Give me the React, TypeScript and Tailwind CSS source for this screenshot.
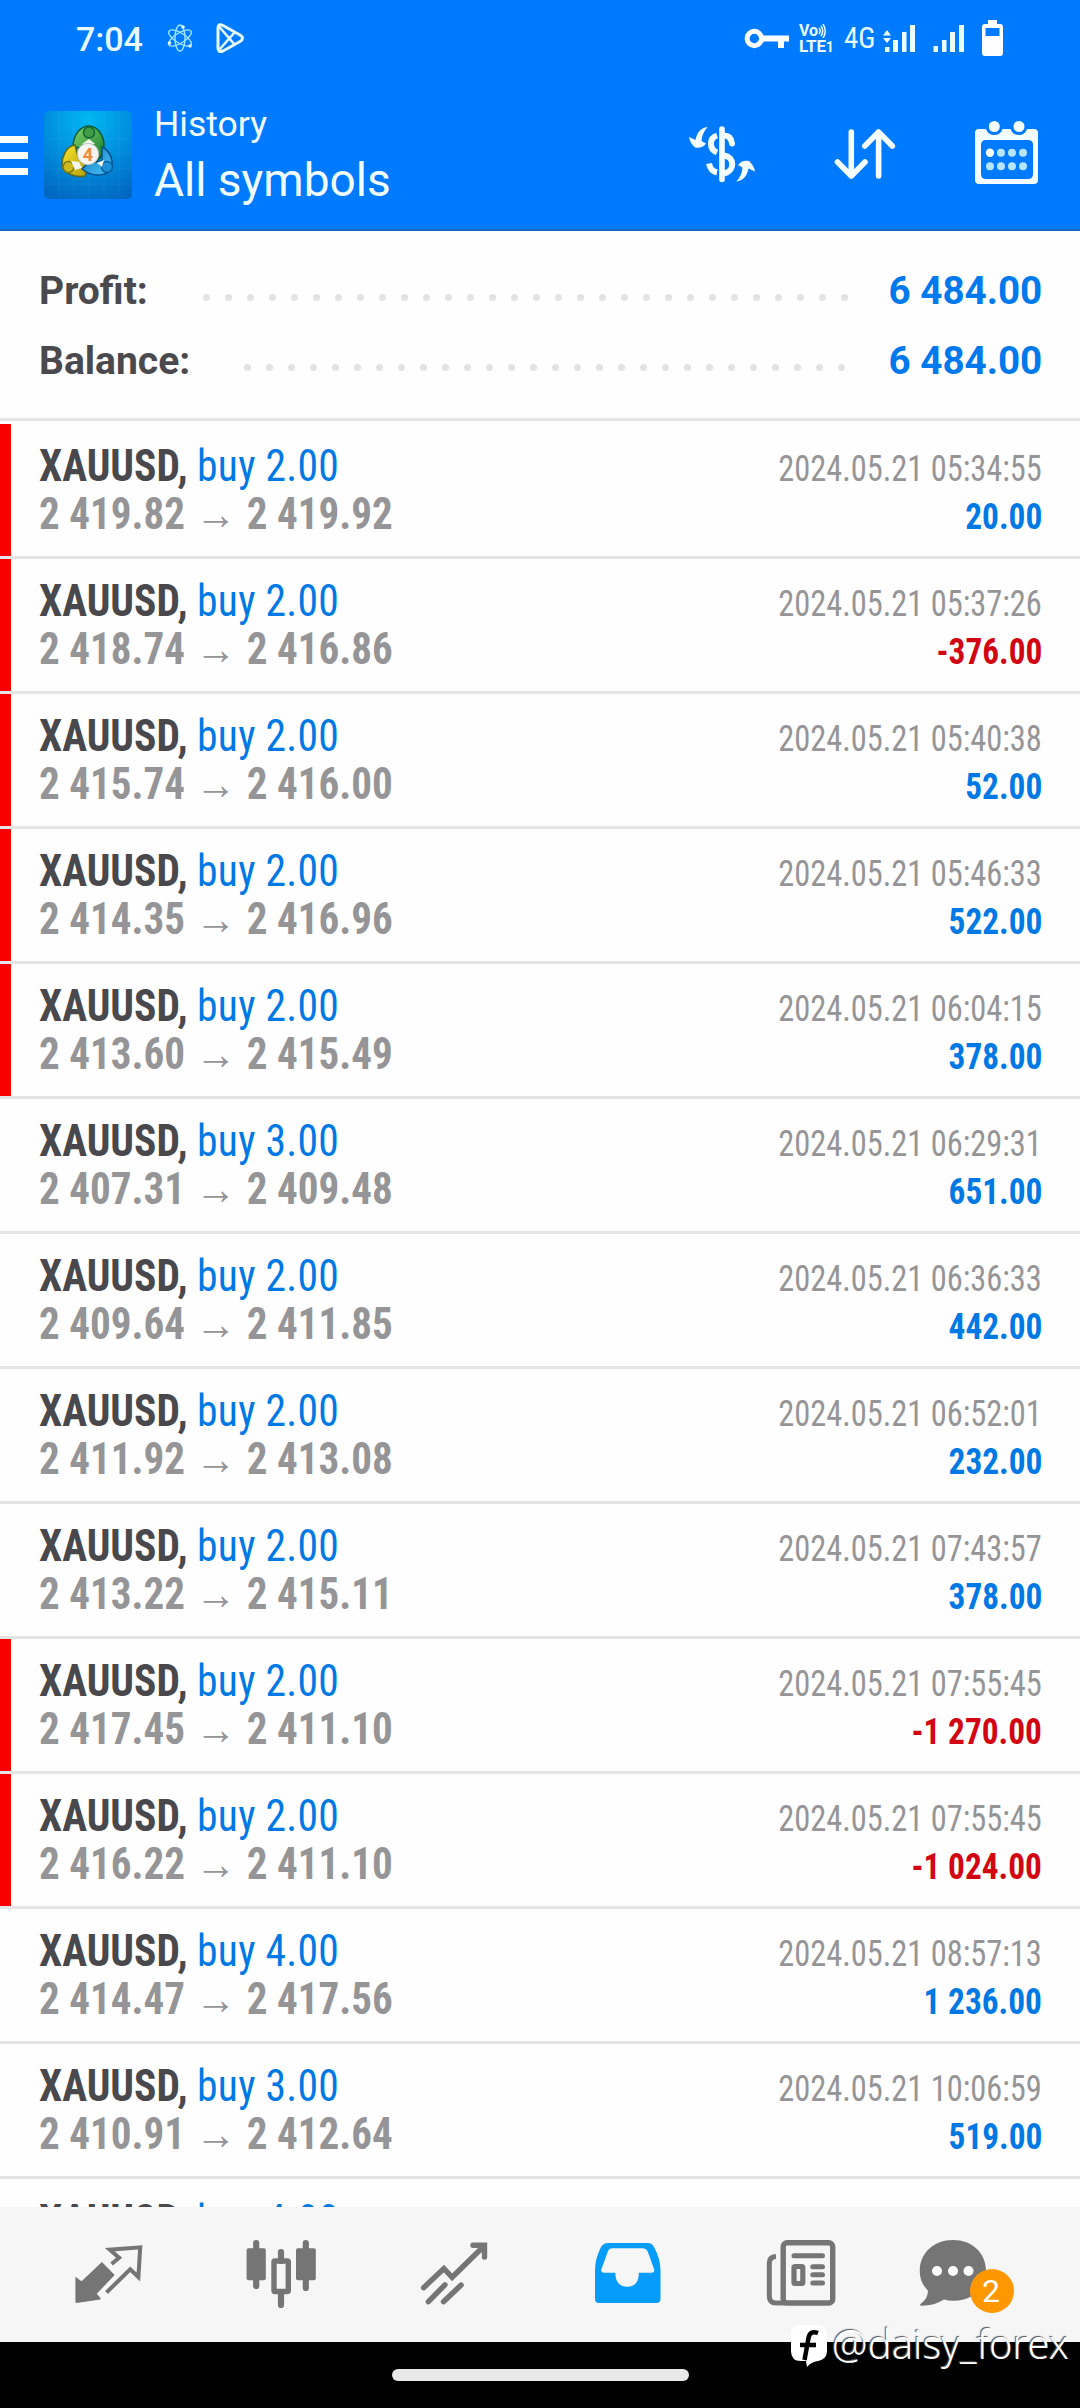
import type { ReactNode } from "react";

type Deal = {
  volume: string;
  open: string;
  close: string;
  time: string;
  profit: string;
  marked?: boolean;
};

const deals: Deal[] = [
  { volume: "2.00", open: "2 419.82", close: "2 419.92", time: "2024.05.21 05:34:55", profit: "20.00", marked: true },
  { volume: "2.00", open: "2 418.74", close: "2 416.86", time: "2024.05.21 05:37:26", profit: "-376.00", marked: true },
  { volume: "2.00", open: "2 415.74", close: "2 416.00", time: "2024.05.21 05:40:38", profit: "52.00", marked: true },
  { volume: "2.00", open: "2 414.35", close: "2 416.96", time: "2024.05.21 05:46:33", profit: "522.00", marked: true },
  { volume: "2.00", open: "2 413.60", close: "2 415.49", time: "2024.05.21 06:04:15", profit: "378.00", marked: true },
  { volume: "3.00", open: "2 407.31", close: "2 409.48", time: "2024.05.21 06:29:31", profit: "651.00" },
  { volume: "2.00", open: "2 409.64", close: "2 411.85", time: "2024.05.21 06:36:33", profit: "442.00" },
  { volume: "2.00", open: "2 411.92", close: "2 413.08", time: "2024.05.21 06:52:01", profit: "232.00" },
  { volume: "2.00", open: "2 413.22", close: "2 415.11", time: "2024.05.21 07:43:57", profit: "378.00" },
  { volume: "2.00", open: "2 417.45", close: "2 411.10", time: "2024.05.21 07:55:45", profit: "-1 270.00", marked: true },
  { volume: "2.00", open: "2 416.22", close: "2 411.10", time: "2024.05.21 07:55:45", profit: "-1 024.00", marked: true },
  { volume: "4.00", open: "2 414.47", close: "2 417.56", time: "2024.05.21 08:57:13", profit: "1 236.00" },
  { volume: "3.00", open: "2 410.91", close: "2 412.64", time: "2024.05.21 10:06:59", profit: "519.00" },
];

function StatusBar() {
  return (
    <div className="flex h-[76px] items-start pt-[18px] text-[#e8fcff]">
      <span className="ml-[76px] w-[90px] text-[34px] leading-[43px] font-medium">7:04</span>
      <svg className="h-10 w-7" viewBox="166 18 28 40" fill="none" stroke="#9fe6ff" strokeWidth="1.4">
        <ellipse cx="180" cy="38" rx="5" ry="13" />
        <ellipse cx="180" cy="38" rx="5" ry="13" transform="rotate(58 180 38)" />
        <ellipse cx="180" cy="38" rx="5" ry="13" transform="rotate(-58 180 38)" />
        <g fill="#dffaff" stroke="none">
          <circle cx="183" cy="27" r="1.8" />
          <circle cx="169.500" cy="43" r="1.8" />
          <circle cx="190" cy="46" r="1.8" />
        </g>
      </svg>
      <svg className="ml-5 h-10 w-8" viewBox="214 18 32 40" fill="none" stroke="#e4fbff" strokeWidth="3" strokeLinejoin="round">
        <path d="M218 28Q218 23 223 25.500L240 35Q245 38 240 41.500L223 51Q218 53 218 48Z" />
        <path d="M219 26.500L235 45M219 50L235 32" strokeWidth="2.600" />
      </svg>

      <svg className="ml-auto h-10 w-[46px]" viewBox="742 18 46 40">
        <circle cx="752.300" cy="38.500" r="7.200" fill="none" stroke="#fff" strokeWidth="5" />
        <path d="M760 35.500H787V41.500H782V48H776V41.500H760Z" fill="#fff" />
      </svg>
      <div className="ml-[9px] flex h-[38px] w-[36px] flex-col pt-[6px] font-bold">
        <div className="flex h-[14px] items-center">
          <span className="text-[16px] leading-[14px]">Vo</span>
          <svg className="h-[14px] w-[9px]" viewBox="0 0 8 14" fill="none" stroke="#e8fcff" strokeWidth="1.5">
            <path d="M.5 4Q3 7 .5 10M2.500 2Q6 7 2.500 12M4.500 0Q9 7 4.500 14" />
          </svg>
        </div>
        <div className="flex h-[16px] items-end">
          <span className="text-[17px] leading-[15px] tracking-[-0.2px]">LTE</span>
          <span className="text-[14px] leading-[13px]">1</span>
        </div>
      </div>
      <span className="ml-[9px] w-[39px] pt-[3px] text-[29px] leading-[35px] [font-stretch:75%]">4G</span>
      <svg className="h-10 w-8" viewBox="883 18 32 40" fill="#eafdff">
        <path d="M887 30L891 35.500H883ZM887 43L891 38H883ZM885 47H889.500V52H885ZM893 40H898V52H893ZM902 32H906.500V52H902ZM910 25H915V52H910Z" />
      </svg>
      <svg className="ml-[18px] h-10 w-8" viewBox="933 18 32 40" fill="#eafdff">
        <path d="M933.500 46H938V52H933.500ZM942 40H946.500V52H942ZM950 32H955V52H950ZM959 25H964V52H959Z" />
      </svg>
      <svg className="mr-[77px] ml-[17px] h-10 w-[21px]" viewBox="982 18 21 40">
        <path fill="#fff" fillRule="evenodd" d="M988 20H997V24H1000Q1003 24 1003 27V53Q1003 56 1000 56H985Q982 56 982 53V27Q982 24 985 24H988ZM985.500 28V36H999.500V28Z" />
      </svg>
    </div>
  );
}

function AppLogo() {
  return (
    <svg className="h-[88px] w-[88px]" viewBox="0 0 88 88">
      <defs>
        <radialGradient id="tile" cx="0.5" cy="0.1" r="1">
          <stop offset="0" stopColor="#00b8f2" />
          <stop offset="0.55" stopColor="#0089dc" />
          <stop offset="1" stopColor="#0064bd" />
        </radialGradient>
        <linearGradient id="green" x1="0" x2="1" y1="0" y2="1">
          <stop offset="0" stopColor="#86d36c" />
          <stop offset="1" stopColor="#117a2a" />
        </linearGradient>
        <linearGradient id="yellow" x1="0" x2="1" y1="0" y2="1">
          <stop offset="0" stopColor="#f6e52a" />
          <stop offset="1" stopColor="#b59b0a" />
        </linearGradient>
        <linearGradient id="blue" x1="0" x2="1" y1="0" y2="1">
          <stop offset="0" stopColor="#0d78c2" />
          <stop offset="1" stopColor="#4cc4f5" />
        </linearGradient>
      </defs>
      <rect width="88" height="88" rx="5" fill="url(#tile)" />
      <path d="M15 1V87M30 1V87M45 1V87M60 1V87M75 1V87M1 28H87M1 43H87M1 58H87M1 73H87" stroke="#fff" strokeOpacity="0.05" />
      <g strokeWidth="1.500">
        <path d="M29 36C29 22 38 15 45 15C53 15 60 24 60 34C60 41 57 47 52 50L46 38Z" fill="url(#green)" stroke="#0b5a3a" />
        <path d="M31 34C22 35 18 46 18 54C18 62 32 67 41 65L46 52L34 46Z" fill="url(#yellow)" stroke="#5c6a20" />
        <path d="M58 36C67 40 69 50 68 57C65 65 48 67 38 58L44 52L58 50Z" fill="url(#blue)" stroke="#0a4f8c" />
        <circle cx="45" cy="21.500" r="5.500" fill="#3f9d43" stroke="#136a35" />
        <circle cx="24.500" cy="56" r="5.500" fill="#cdbb1c" stroke="#7b7a17" />
        <circle cx="63" cy="56" r="5.500" fill="#1c8fd6" stroke="#0b5fa0" />
      </g>
      <path d="M38 33L45 28L51 33ZM27 50L35 51L38 57L31 59ZM53 52L60 49L58 56Z" fill="#f2f8ee" />
      <circle cx="44" cy="43" r="10.700" fill="#f6f4f1" stroke="#b9c2c0" />
      <text x="44" y="49.500" textAnchor="middle" fontSize="18" fontWeight="700" fill="#f08a3c" fontFamily="Roboto, sans-serif">4</text>
    </svg>
  );
}

function Header() {
  return (
    <header className="h-[231px] shrink-0 border-b-2 border-[#1268bd] bg-[#007aff]">
      <StatusBar />
      <div className="flex h-[152px] items-start text-[#f0fdff]">
        <div className="mt-[60px] flex w-7 flex-col gap-[9px]">
          <div className="h-[7px] bg-white" />
          <div className="h-[7px] bg-white" />
          <div className="h-[7px] bg-white" />
        </div>
        <div className="mt-[35px] ml-4">
          <AppLogo />
        </div>
        <div className="mt-[25px] ml-[22px] flex flex-col">
          <span className="text-[35.500px] leading-[46px]">History</span>
          <span className="mt-[3px] text-[46px] leading-[60px]">All symbols</span>
        </div>
        <svg className="mt-[45px] ml-auto h-[66px] w-[68px]" viewBox="688 121 68 66">
          <g fill="#f4feff">
            <path d="M707.700 127C700 128 697 133 695.500 140L689 137Q690 143 695 147.500Q702 149 706 143.500L701.500 141C702 135 704 131 707.700 127Z" />
            <path d="M707.700 127C700 128 697 133 695.500 140L689 137Q690 143 695 147.500Q702 149 706 143.500L701.500 141C702 135 704 131 707.700 127Z" transform="rotate(180 722 154.300)" />
          </g>
          <g fill="none" stroke="#f4feff">
            <path d="M722 129V179.500" strokeWidth="5.600" strokeLinecap="round" />
            <path d="M717 135.500C709 138 709 149 717 152.500M717 172.500Q710.500 171 709 163.500" strokeWidth="6" />
            <path d="M724 135.500Q731 135.500 732 143.500" strokeWidth="6" strokeLinecap="round" />
            <path d="M724 155.500C735 157 735 171 724 173.500" strokeWidth="6" />
          </g>
        </svg>
        <svg className="mt-[45px] ml-[76px] h-[66px] w-16" viewBox="832 121 64 66" fill="none" stroke="#f4feff" strokeWidth="5.600" strokeLinecap="round" strokeLinejoin="round">
          <path d="M851.300 132V176M837.500 162L851.300 176L865 162M878.600 176V132M864.800 146L878.600 132L892.300 146" />
        </svg>
        <svg className="mt-[43px] mr-[41px] ml-[78px] h-[68px] w-[65px]" viewBox="974 119 65 68">
          <path fill="#f4feff" fillRule="evenodd" d="M979 129H986Q988 135 994.300 135Q1000.500 135 1002.500 129H1010.500Q1012.500 135 1019 135Q1025 135 1027 129H1034Q1038 129 1038 133V180Q1038 184 1034 184H979Q975 184 975 180V133Q975 129 979 129ZM986 140Q981 140 981 145V174Q981 179 986 179H1028Q1033 179 1033 174V145Q1033 140 1028 140Z" />
          <g fill="#f4feff">
            <circle cx="994.300" cy="126.500" r="5.500" />
            <circle cx="1019" cy="126.500" r="5.500" />
            <circle cx="990" cy="152.700" r="4.200" />
          </g>
          <g fill="#b5e5ff">
            <circle cx="1001" cy="152.700" r="4" />
            <circle cx="1012" cy="152.700" r="4" />
            <circle cx="1023" cy="152.700" r="4" />
            <circle cx="990" cy="166.300" r="4" />
            <circle cx="1001" cy="166.300" r="4" />
            <circle cx="1012" cy="166.300" r="4" />
            <circle cx="1023" cy="166.300" r="4" />
          </g>
        </svg>
      </div>
    </header>
  );
}

function SummaryRow({ label, value, dots, trailing }: { label: string; value: string; dots: number; trailing: string }) {
  return (
    <div className="flex h-[70px] items-center pr-10 pl-[39px] text-[39px] leading-[70px] font-bold">
      <span className="text-[#4a494d]">{label}</span>
      <div className={`mt-[13px] ml-auto flex gap-[15px] ${trailing}`}>
        {Array.from({ length: dots }, (_, i) => (
          <span key={i} className="size-[7px] rounded-full bg-[#e3e3e5]" />
        ))}
      </div>
      <span className="w-[153px] origin-right scale-x-[0.99] text-right whitespace-nowrap text-[#0079ec]">{value}</span>
    </div>
  );
}

function DealRow({ deal }: { deal: Deal }) {
  const negative = deal.profit.startsWith("-");
  return (
    <div className="flex h-[135px] border-b-[3px] border-[#e4e4e4]">
      <div className={deal.marked ? "w-[11px] bg-[#f80000]" : "w-[11px]"} />
      <div className="flex flex-1 flex-col pt-[18px] pr-[38px] pl-7 [font-stretch:75%]">
        <div className="flex h-12 items-baseline justify-between leading-[48px]">
          <div className="origin-left scale-x-[0.943] text-[44px] whitespace-pre">
            <span className="font-bold text-[#49484c]">XAUUSD, </span>
            <span className="tracking-[0.3px] text-[#0079e4]">buy {deal.volume}</span>
          </div>
          <div className="origin-right scale-x-[0.9] text-[36px] text-[#959597]">{deal.time}</div>
        </div>
        <div className="flex h-12 items-baseline justify-between leading-[48px] font-bold">
          <div className="flex origin-left scale-x-[0.934] text-[44px] text-[#959597]">
            <span>{deal.open}</span>
            <span className="mr-[11px] ml-[11px] w-[44px] font-['Roboto','Liberation_Serif',serif]">{deal.open && "→"}</span>
            <span>{deal.close}</span>
          </div>
          <div className={negative ? "origin-right scale-x-[0.925] text-[36px] text-[#d20512]" : "origin-right scale-x-[0.925] text-[36px] text-[#0079e4]"}>
            {deal.profit}
          </div>
        </div>
      </div>
    </div>
  );
}

function NavIcon({ children }: { children: ReactNode }) {
  return (
    <svg className="h-[135px] w-[173px]" viewBox="0 0 173 135" fill="none">
      {children}
    </svg>
  );
}

function BottomNav() {
  return (
    <nav className="flex h-[135px] shrink-0 bg-[#f6f6f6] pl-[22px]">
      <NavIcon>
        <path d="M53.400 69.700L59.600 74.300L79.900 55L92.700 68L74.800 86.700L78.500 91V92.500L54.400 96L53.400 95Z" fill="#757575" />
        <path d="M89.600 57L97.100 50.700L87.800 42.700L118.200 40.300L116.400 70L108.200 62.300L84.500 85.500" stroke="#757575" strokeWidth="4" />
      </NavIcon>
      <NavIcon>
        <path d="M61.200 36V79M110.800 36V81M86 45V54M86 86V98" stroke="#757575" strokeWidth="6.200" strokeLinecap="round" />
        <rect x="51.600" y="41.300" width="19.200" height="32" rx="2" fill="#757575" />
        <rect x="101" y="41.300" width="19.800" height="32" rx="2" fill="#757575" />
        <rect x="79" y="54" width="14.300" height="30.500" rx="1" stroke="#757575" strokeWidth="5.400" />
      </NavIcon>
      <NavIcon>
        <path d="M55.600 80.700L75.900 61.500L84.100 70.300L115 40M105 38.300H116.500V50M60.400 94.700L76.900 77.800M75.500 94.700L93.100 78" stroke="#757575" strokeWidth="5.400" strokeLinecap="round" />
      </NavIcon>
      <NavIcon>
        <path
          d="M67 36H107Q111 36 113 40Q119.500 52 119.500 63V92Q119.500 96 115.500 96H58Q54 96 54 92V63Q54 52 60 40Q62.500 36 67 36ZM71 41.300Q68 41.300 67 44L60.500 62Q59.500 65.700 62.500 65.700H74.400V68Q75.500 79.700 86.200 79.700Q96.700 79.700 97.800 68V65.700H111Q114 65.700 113 62L106.500 44Q105 41.300 102 41.300Z"
          fill="#069cfc"
          fillRule="evenodd"
        />
      </NavIcon>
      <NavIcon>
        <rect x="69.200" y="35.700" width="49.500" height="60.300" rx="4" stroke="#757575" strokeWidth="5.400" />
        <path d="M62 49.500Q55.300 50 55.300 56V89Q55.300 96 62 96H72" stroke="#757575" strokeWidth="5" />
        <path d="M80 48.700H108.500M98.800 59.700H108.500M98.800 67.700H108.500M98.800 76H108.500" stroke="#757575" strokeWidth="5" strokeLinecap="round" />
        <rect x="80" y="59.500" width="8.800" height="17" rx="1" stroke="#757575" strokeWidth="5.200" />
      </NavIcon>
      <div className="relative h-[135px] w-[173px]">
        <NavIcon>
          <path d="M66 33C85 33 99 46 99 63.500C99 82 85 94 66 93.700Q61 93.700 57 92.500Q47 99 34 98.700Q32 98 34 96.500Q41 91 41 83.700C35 77 32.800 72 32.800 63.500C32.800 46 47 33 66 33Z" fill="#757575" />
          <g fill="#fff">
            <circle cx="50" cy="64" r="5" />
            <circle cx="66" cy="64" r="5" />
            <circle cx="81.500" cy="64" r="5" />
          </g>
        </NavIcon>
        <span className="absolute top-[62px] left-[83px] flex size-[44px] items-center justify-center rounded-full bg-[#ff9800] pr-0.5 text-[32px] leading-[44px] text-white">2</span>
      </div>
    </nav>
  );
}

function Watermark() {
  return (
    <div className="absolute right-[11px] bottom-[40px] flex items-center whitespace-nowrap text-white">
      <svg className="mt-1 h-[44px] w-[38px]" viewBox="0 0 38 44">
        <path d="M10 1H27Q37 1 37 12V27Q37 35 28 37Q21 38 17 43L16 37H11Q1 37 1 27V12Q1 1 10 1Z" fill="#fff" />
        <path d="M28 9Q20 6 18.500 14L14.500 36M10 21H26" fill="none" stroke="#000" strokeWidth="4.500" />
      </svg>
      <span className="ml-[4px] font-['Noto_Sans',sans-serif] text-[40px] leading-[44px] font-light [text-shadow:-1px_-1px_1px_#555]">@daisy_forex</span>
    </div>
  );
}

export default function App() {
  return (
    <div className="relative flex h-[2408px] w-[1080px] flex-col overflow-hidden bg-[#fefefe] font-['Roboto',sans-serif]">
      <Header />
      <section className="h-[193px] shrink-0 pt-[25px]">
        <SummaryRow label="Profit:" value="6 484.00" dots={30} trailing="mr-[39px]" />
        <SummaryRow label="Balance:" value="6 484.00" dots={28} trailing="mr-[42px]" />
        <div className="mt-[22px] h-[3px] bg-[#e4e4e4]" />
      </section>
      <main className="h-[1783px] shrink-0 overflow-hidden">
        {deals.map((deal, i) => (
          <DealRow key={i} deal={deal} />
        ))}
        <DealRow deal={{ volume: "4.00", open: "", close: "", time: "", profit: "" }} />
      </main>
      <BottomNav />
      <footer className="flex flex-1 justify-center bg-black pt-[27px]">
        <div className="h-3 w-[297px] rounded-full bg-[#e9e9e9]" />
      </footer>
      <Watermark />
    </div>
  );
}
